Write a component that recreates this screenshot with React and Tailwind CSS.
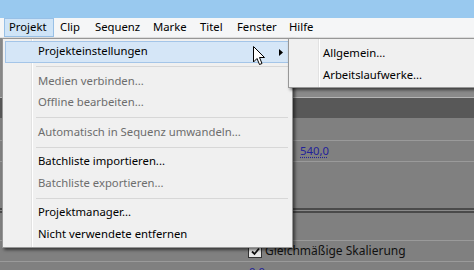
import React from 'react';

const menuBar = [
  { label: 'Projekt', w: 'w-[50px]', pl: 'pl-[4px]', active: true },
  { label: 'Clip', w: 'w-[33px]', pl: 'pl-[5px]' },
  { label: 'Sequenz', w: 'w-[58px]', pl: 'pl-[7px]' },
  { label: 'Marke', w: 'w-[47px]', pl: 'pl-[7px]' },
  { label: 'Titel', w: 'w-[37px]', pl: 'pl-[7px]' },
  { label: 'Fenster', w: 'w-[52px]', pl: 'pl-[7px]' },
  { label: 'Hilfe', w: 'w-[45px]', pl: 'pl-[7px]' },
];

const items = [
  { label: 'Projekteinstellungen', hot: true, sub: true },
  { sep: true },
  { label: 'Medien verbinden...', disabled: true },
  { label: 'Offline bearbeiten...', disabled: true },
  { sep: true },
  { label: 'Automatisch in Sequenz umwandeln...', disabled: true },
  { sep: true },
  { label: 'Batchliste importieren...' },
  { label: 'Batchliste exportieren...', disabled: true },
  { sep: true },
  { label: 'Projektmanager...' },
  { label: 'Nicht verwendete entfernen' },
];

const MenuItem = ({ item }) => {
  if (item.sep) {
    return (
      <div className="h-[8px] flex items-center pl-[29px]">
        <div className="h-px flex-1 bg-[#d7d7d7] ml-[2px] mr-[2px]" />
      </div>
    );
  }
  return (
    <div
      className={`h-[21.5px] flex items-center relative border ${
        item.hot ? 'bg-[#d5e6f7] border-[#a4c5e8]' : 'border-transparent'
      } ${item.disabled ? 'text-[#6d6d6d]' : 'text-black'}`}
    >
      <span className="pl-[32px]">{item.label}</span>
      {item.sub && (
        <svg className="absolute right-[6px] top-[7px]" width="4" height="7" viewBox="0 0 4 7">
          <path d="M0 0 L4 3.5 L0 7 Z" fill="#000" />
        </svg>
      )}
    </div>
  );
};

const Cursor = () => (
  <svg className="absolute left-[253px] top-[46px]" width="13" height="20" viewBox="0 0 13 20">
    <path
      d="M0.5 0.5 L0.5 16 L4 12.5 L6.5 18.5 L9 17.5 L6.5 11.5 L11.5 11.5 Z"
      fill="#fff"
      stroke="#000"
      strokeWidth="1"
      strokeLinejoin="round"
    />
  </svg>
);

export default function App() {
  return (
    <div
      className="relative w-[474px] h-[270px] overflow-hidden bg-[#858585] text-[11.3px]"
      style={{ fontFamily: '"Noto Sans", "Open Sans", sans-serif' }}
    >
      {/* title bar */}
      <div className="h-[18px] bg-[#99c9ef]" />

      {/* menu bar */}
      <div className="h-[20px] bg-[#f5f6f7] flex items-stretch pl-[4px] border-b border-[#e3e3e3]">
        {menuBar.map((m) => (
          <div
            key={m.label}
            className={`${m.w} ${m.pl} flex items-center border ${
              m.active ? 'bg-[#cfe4f7] border-[#98c0e6]' : 'border-transparent'
            }`}
          >
            {m.label}
          </div>
        ))}
      </div>

      {/* workspace panels */}
      <div className="flex flex-col">
        <div className="h-[59px] bg-[#8a8a8a]" />
        <div className="h-px bg-[#b4b4b4]" />
        <div className="h-[20px] bg-[#585858]" />
        <div className="h-[23px] bg-[#808080] border-b border-[#9a9a9a]" />
        <div className="h-[21px] bg-[#808080] border-b border-[#9a9a9a] flex items-center pl-[300px]">
          <span className="text-[#22229a] underline decoration-dotted underline-offset-2">540,0</span>
        </div>
        <div className="h-[46px] bg-[#808080]" />
        <div className="h-[2px] bg-[#4a4a4a]" />
        <div className="h-px bg-[#8a8a8a]" />
        <div className="h-[2px] bg-[#4a4a4a]" />
        <div className="h-[28px] bg-[#808080] border-b border-[#9a9a9a]" />
        <div className="h-[21px] bg-[#808080] border-b border-[#9a9a9a] flex items-center pl-[248px] gap-[3px]">
          <div className="w-[14px] h-[14px] bg-[#e8e8e8] border border-[#333] flex items-center justify-center">
            <svg width="11" height="11" viewBox="0 0 11 11">
              <path d="M2 5.5 L4.5 8 L9 2.5" fill="none" stroke="#111" strokeWidth="1.8" />
            </svg>
          </div>
          <span className="text-[#111] text-[12px]">Gleichmäßige Skalierung</span>
        </div>
        <div className="h-[20px] bg-[#808080] pl-[249px] pt-[2px]">
          <span className="text-[#22229a]">0,0</span>
        </div>
      </div>

      {/* dropdown */}
      <div className="absolute left-[2px] top-[38px] w-[291px] h-[210px] bg-[#f0f0f0] border border-[#979797] shadow-[2px_2px_3px_rgba(0,0,0,0.55)] pt-[2px] px-[2px]">
        <div className="absolute left-[28px] top-0 bottom-0 w-px bg-[#e2e2e2]" />
        <div className="absolute left-[29px] top-0 bottom-0 w-px bg-white" />
        <div className="relative flex flex-col">
          {items.map((it, i) => (
            <MenuItem key={i} item={it} />
          ))}
        </div>
      </div>

      {/* submenu */}
      <div className="absolute left-[288px] top-[38px] w-[200px] h-[50px] bg-[#f0f0f0] border border-[#979797] shadow-[2px_2px_3px_rgba(0,0,0,0.55)] pt-[3px] px-[2px]">
        <div className="absolute left-[29px] top-0 bottom-0 w-px bg-[#e2e2e2]" />
        <div className="absolute left-[30px] top-0 bottom-0 w-px bg-white" />
        <div className="relative flex flex-col">
          <div className="h-[22px] flex items-center pl-[32px]">Allgemein...</div>
          <div className="h-[22px] flex items-center pl-[32px]">Arbeitslaufwerke...</div>
        </div>
      </div>

      <Cursor />
    </div>
  );
}
